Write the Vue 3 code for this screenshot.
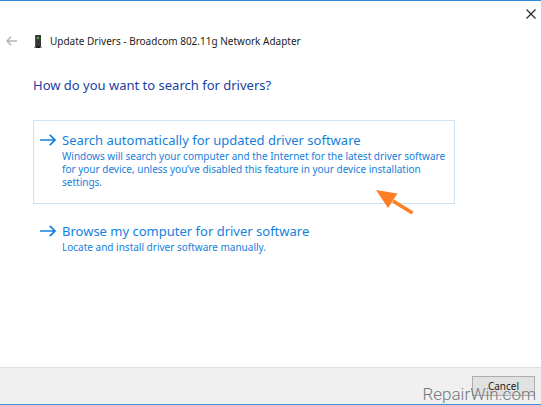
<script setup>
const options = [
  {
    title: 'Search automatically for updated driver software',
    lines: [
      'Windows will search your computer and the Internet for the latest driver software',
      'for your device, unless you’ve disabled this feature in your device installation',
      'settings.',
    ],
    selected: true,
  },
  {
    title: 'Browse my computer for driver software',
    lines: ['Locate and install driver software manually.'],
    selected: false,
  },
]
</script>

<template>
  <main class="dialog">
    <div class="caption">
      <button class="close" type="button" aria-label="Close">
        <svg width="10" height="10" viewBox="0 0 10 10" aria-hidden="true">
          <path d="M.5 .5 9.5 9.5M9.5 .5 .5 9.5" fill="none" stroke="#2b2b2b" stroke-width="1.2" />
        </svg>
      </button>
    </div>

    <header class="titlebar">
      <button class="back" type="button" aria-label="Back" disabled>
        <svg width="12" height="10" viewBox="0 0 12 10" aria-hidden="true">
          <path d="M11 5H1.2M5.2 .8 1 5l4.2 4.2" fill="none" stroke="#b4b4b4" stroke-width="1.5" />
        </svg>
      </button>
      <svg class="device" width="8" height="13" viewBox="0 0 8 13" aria-hidden="true">
        <path d="M1 0h6v12H1z" fill="#383838" />
        <path d="M1 0h1v12H1z" fill="#555" />
        <path d="M0 12h8v1H0z" fill="#8b8b8b" />
        <path d="M2 11h4v2H2z" fill="#222" />
        <path d="M3 2h2v2H3z" fill="#26c43a" />
      </svg>
      <span class="title">Update Drivers - Broadcom 802.11g Network Adapter</span>
    </header>

    <section class="content">
      <h1>How do you want to search for drivers?</h1>
      <button
        v-for="option in options"
        :key="option.title"
        type="button"
        class="option"
        :class="{ selected: option.selected }"
      >
        <svg class="arrow" width="16" height="12" viewBox="0 0 16 12" aria-hidden="true">
          <path d="M0 6h14.8M9.8 .8 15 6l-5.2 5.2" fill="none" stroke="#1580dc" stroke-width="1.7" />
        </svg>
        <span class="text">
          <span class="name">{{ option.title }}</span>
          <span v-for="line in option.lines" :key="line" class="line">{{ line }}</span>
        </span>
        <svg v-if="option.selected" class="pointer" width="40" height="26" viewBox="0 0 40 26" aria-hidden="true">
          <path d="M17 11 36.500 23" fill="none" stroke="#ff7f27" stroke-width="3.600" stroke-linecap="butt" />
          <path d="M0 0 21.500 3.500 12 18z" fill="#ff7f27" />
        </svg>
      </button>
    </section>

    <footer class="footer">
      <button class="cancel" type="button">Cancel</button>
      <span class="watermark">RepairWin.com</span>
    </footer>
  </main>
</template>

<style>
body {
  margin: 0;
}
</style>

<style scoped>
.dialog {
  box-sizing: border-box;
  display: flex;
  flex-direction: column;
  min-height: 100vh;
  border-top: 1px solid #2f8ad6;
  border-bottom: 1px solid #3f8fd0;
  background: #fff;
  color: #1c1c1c;
  font-family: "Segoe UI", "Noto Sans", "Open Sans", sans-serif;
  font-size: 10px;
}
button {
  margin: 0;
  padding: 0;
  border: 0;
  background: none;
  color: inherit;
  font: inherit;
}
svg {
  display: block;
  flex: none;
}
.caption {
  display: flex;
  justify-content: flex-end;
  padding: 8px 5px 0 0;
}
.titlebar {
  display: flex;
  align-items: center;
  height: 20px;
  margin-top: 12px;
  padding-left: 6px;
}
.device {
  margin: 0 8px 0 16px;
}
.title {
  white-space: nowrap;
}
.content {
  flex: 1;
  padding: 24px 86px 24px 33px;
}
h1 {
  margin: 0 0 25px;
  color: #1a40a4;
  font-size: 13px;
  font-weight: 400;
  line-height: 20px;
  white-space: nowrap;
}
.option {
  position: relative;
  box-sizing: border-box;
  display: flex;
  align-items: flex-start;
  gap: 6px;
  width: 100%;
  padding: 9px 0 14px 6px;
  border: 1px solid transparent;
  color: #1580dc;
  text-align: left;
}
.selected {
  margin-bottom: 7px;
  border-color: #cce4f7;
}
.arrow {
  margin-top: 4px;
}
.text,
.name,
.line {
  display: block;
  white-space: nowrap;
}
.name {
  font-size: 13px;
  line-height: 20px;
}
.line {
  line-height: 13px;
}
.pointer {
  position: absolute;
  right: 38px;
  bottom: -13px;
}
.footer {
  position: relative;
  display: flex;
  justify-content: flex-end;
  padding: 8px 6px 8px 0;
  border-top: 1px solid #dfdfdf;
  background: #f0f0f0;
}
.cancel {
  box-sizing: border-box;
  width: 63px;
  height: 20px;
  border: 1px solid #adadad;
  background: #e1e1e1;
}
.watermark {
  position: absolute;
  right: 5px;
  bottom: 0;
  color: #74797f;
  font-family: Roboto, "Liberation Sans", sans-serif;
  font-size: 17px;
  font-weight: 300;
  line-height: 20px;
  pointer-events: none;
}
</style>
